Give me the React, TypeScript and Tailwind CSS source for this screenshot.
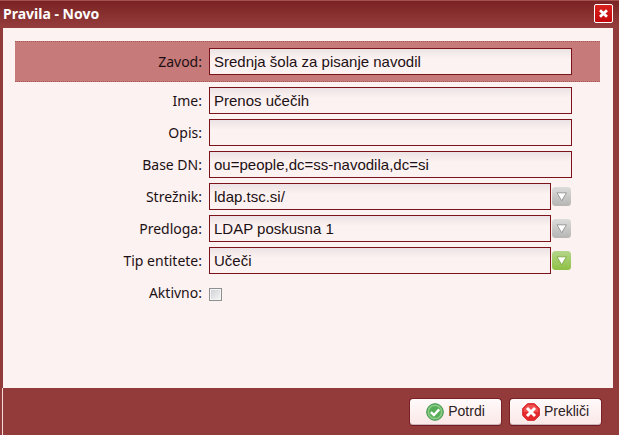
import React, { useState } from 'react';

const fieldClass =
    'h-[27px] min-w-0 flex-1 appearance-none rounded-none border border-solid border-[#7a141a] bg-linear-to-b from-[#ece3e4] to-[#fcf2f1] to-40% px-1 text-[15px] text-[#1c1014] outline-none';

interface RowProps {
    id: string;
    label: string;
    highlighted?: boolean;
    children: React.ReactNode;
}

const Row: React.FC<RowProps> = ({ id, label, highlighted = false, children }) => (
    <div
        className={`flex items-center pr-7 ${
            highlighted ? 'border-y border-dotted border-[#a4595b] bg-[#c67a79] py-1.5' : ''
        }`}
    >
        <label
            htmlFor={id}
            className="mr-[7px] w-[187px] shrink-0 text-right font-['Noto_Sans',sans-serif] text-[14px] leading-5 text-[#1c1014]"
        >
            {label}:
        </label>
        <div className="flex h-[27px] min-w-0 flex-1 items-center">{children}</div>
    </div>
);

interface TextFieldProps {
    id: string;
    label: string;
    initial: string;
    highlighted?: boolean;
}

const TextField: React.FC<TextFieldProps> = ({ id, label, initial, highlighted }) => {
    const [value, setValue] = useState(initial);

    return (
        <Row id={id} label={label} highlighted={highlighted}>
            <input
                id={id}
                type="text"
                value={value}
                onChange={(e) => setValue(e.target.value)}
                className={fieldClass}
            />
        </Row>
    );
};

interface ComboProps {
    id: string;
    label: string;
    options: string[];
    active?: boolean;
}

const Combo: React.FC<ComboProps> = ({ id, label, options, active = false }) => (
    <Row id={id} label={label}>
        <select id={id} className={`${fieldClass} pt-0.5`}>
            {options.map((option) => (
                <option key={option}>{option}</option>
            ))}
        </select>
        <svg width="21" height="21" viewBox="0 0 21 21" className="shrink-0" aria-hidden="true">
            <defs>
                <linearGradient id={`${id}-fill`} x1="0" y1="0" x2="0" y2="1">
                    <stop offset="0" stopColor={active ? '#b4d68a' : '#dcdcdb'} />
                    <stop offset="1" stopColor={active ? '#8fc044' : '#b5b6b4'} />
                </linearGradient>
            </defs>
            <rect x="1" y="1" width="19" height="19" rx="3.5" fill={`url(#${id}-fill)`} />
            <path
                d="M6 6.8 H15.4 L10.7 14.8 Z"
                fill="#fff"
                stroke={active ? '#7fa845' : '#929391'}
                strokeWidth="0.9"
                strokeLinejoin="round"
            />
        </svg>
    </Row>
);

interface ActionButtonProps {
    label: string;
    icon: React.ReactNode;
}

const ActionButton: React.FC<ActionButtonProps> = ({ label, icon }) => (
    <button
        type="button"
        className="flex h-7 w-[93px] items-center justify-center gap-1 rounded-[4px] border border-[#7b2025] border-b-[#6f1b20] bg-linear-to-b from-[#fffafa] to-[#fbe7e7] text-[14px] text-[#2b2022] shadow-[inset_0_-1px_0_#cdb5bd]"
    >
        {icon}
        {label}
    </button>
);

const ConfirmIcon = () => (
    <svg width="18" height="18" viewBox="0 0 18 18" aria-hidden="true">
        <circle cx="9" cy="9" r="8.3" fill="#7cc576" stroke="#3a9149" />
        <circle cx="9" cy="9" r="6.4" fill="#55ad57" stroke="#a2d79c" strokeWidth="0.8" />
        <path d="M4.8 9.2 L7.9 12 L13.2 6.4" fill="none" stroke="#fff" strokeWidth="2.4" />
    </svg>
);

const CancelIcon = () => (
    <svg width="18" height="18" viewBox="0 0 18 18" aria-hidden="true">
        <path
            d="M5.5 0.7 H12.5 L17.3 5.5 V12.5 L12.5 17.3 H5.5 L0.7 12.5 V5.5 Z"
            fill="#e5282b"
            stroke="#d02025"
        />
        <path d="M5.8 1.8 H12.2 L16.2 5.8 V9 H1.8 V5.8 Z" fill="#f0504e" />
        <path d="M5 5 L13 13 M13 5 L5 13" stroke="#fff" strokeWidth="3" />
    </svg>
);

const App: React.FC = () => {
    const [active, setActive] = useState(false);

    return (
        <div className="flex min-h-screen flex-col bg-[#933b3b] font-['Liberation_Sans',sans-serif]">
            <header className="flex h-7 items-center justify-between border-t border-[#a35050] bg-linear-to-b from-[#7b2224] to-[#963d3d] pr-1.5 pb-0.5 pl-[3px]">
                <h1 className="font-['Noto_Sans',sans-serif] text-[14px] leading-5 font-bold text-white">
                    Pravila - Novo
                </h1>
                <button
                    type="button"
                    aria-label="Zapri"
                    className="flex size-[19px] items-center justify-center rounded-[2px] border border-white bg-linear-to-b from-[#d8201c] to-[#c4060a]"
                >
                    <svg width="11" height="11" viewBox="0 0 11 11" aria-hidden="true">
                        <path d="M2 2.2 L9 8.8 M9 2.2 L2 8.8" stroke="#fff" strokeWidth="2.8" />
                    </svg>
                </button>
            </header>

            <main className="mr-1.5 ml-[3px] flex-1 bg-[#fcf2f1] pt-[13px] pr-[13px] pb-3 pl-3">
                <form className="flex flex-col gap-[5px]">
                    <TextField
                        id="zavod"
                        label="Zavod"
                        initial="Srednja šola za pisanje navodil"
                        highlighted
                    />
                    <TextField id="ime" label="Ime" initial="Prenos učečih" />
                    <TextField id="opis" label="Opis" initial="" />
                    <TextField id="base-dn" label="Base DN" initial="ou=people,dc=ss-navodila,dc=si" />
                    <Combo id="streznik" label="Strežnik" options={['ldap.tsc.si/']} />
                    <Combo id="predloga" label="Predloga" options={['LDAP poskusna 1']} />
                    <Combo id="tip-entitete" label="Tip entitete" options={['Učeči']} active />
                    <Row id="aktivno" label="Aktivno">
                        <input
                            id="aktivno"
                            type="checkbox"
                            checked={active}
                            onChange={(e) => setActive(e.target.checked)}
                            className="mt-1 size-[13px] appearance-none border border-[#8e8f8f] bg-linear-to-br from-[#cfd0d4] to-[#f6f6f6] shadow-[inset_0_0_0_1px_#f4f4f4] checked:bg-[#933b3b]"
                        />
                    </Row>
                </form>
            </main>

            <footer className="flex h-[47px] items-center justify-end gap-[7px] border-l-2 border-[#933b3b] pr-[17px]">
                <div className="h-full w-px bg-[#f3dddb]" />
                <div className="flex-1" />
                <ActionButton label="Potrdi" icon={<ConfirmIcon />} />
                <ActionButton label="Prekliči" icon={<CancelIcon />} />
            </footer>
        </div>
    );
};

export default App;
